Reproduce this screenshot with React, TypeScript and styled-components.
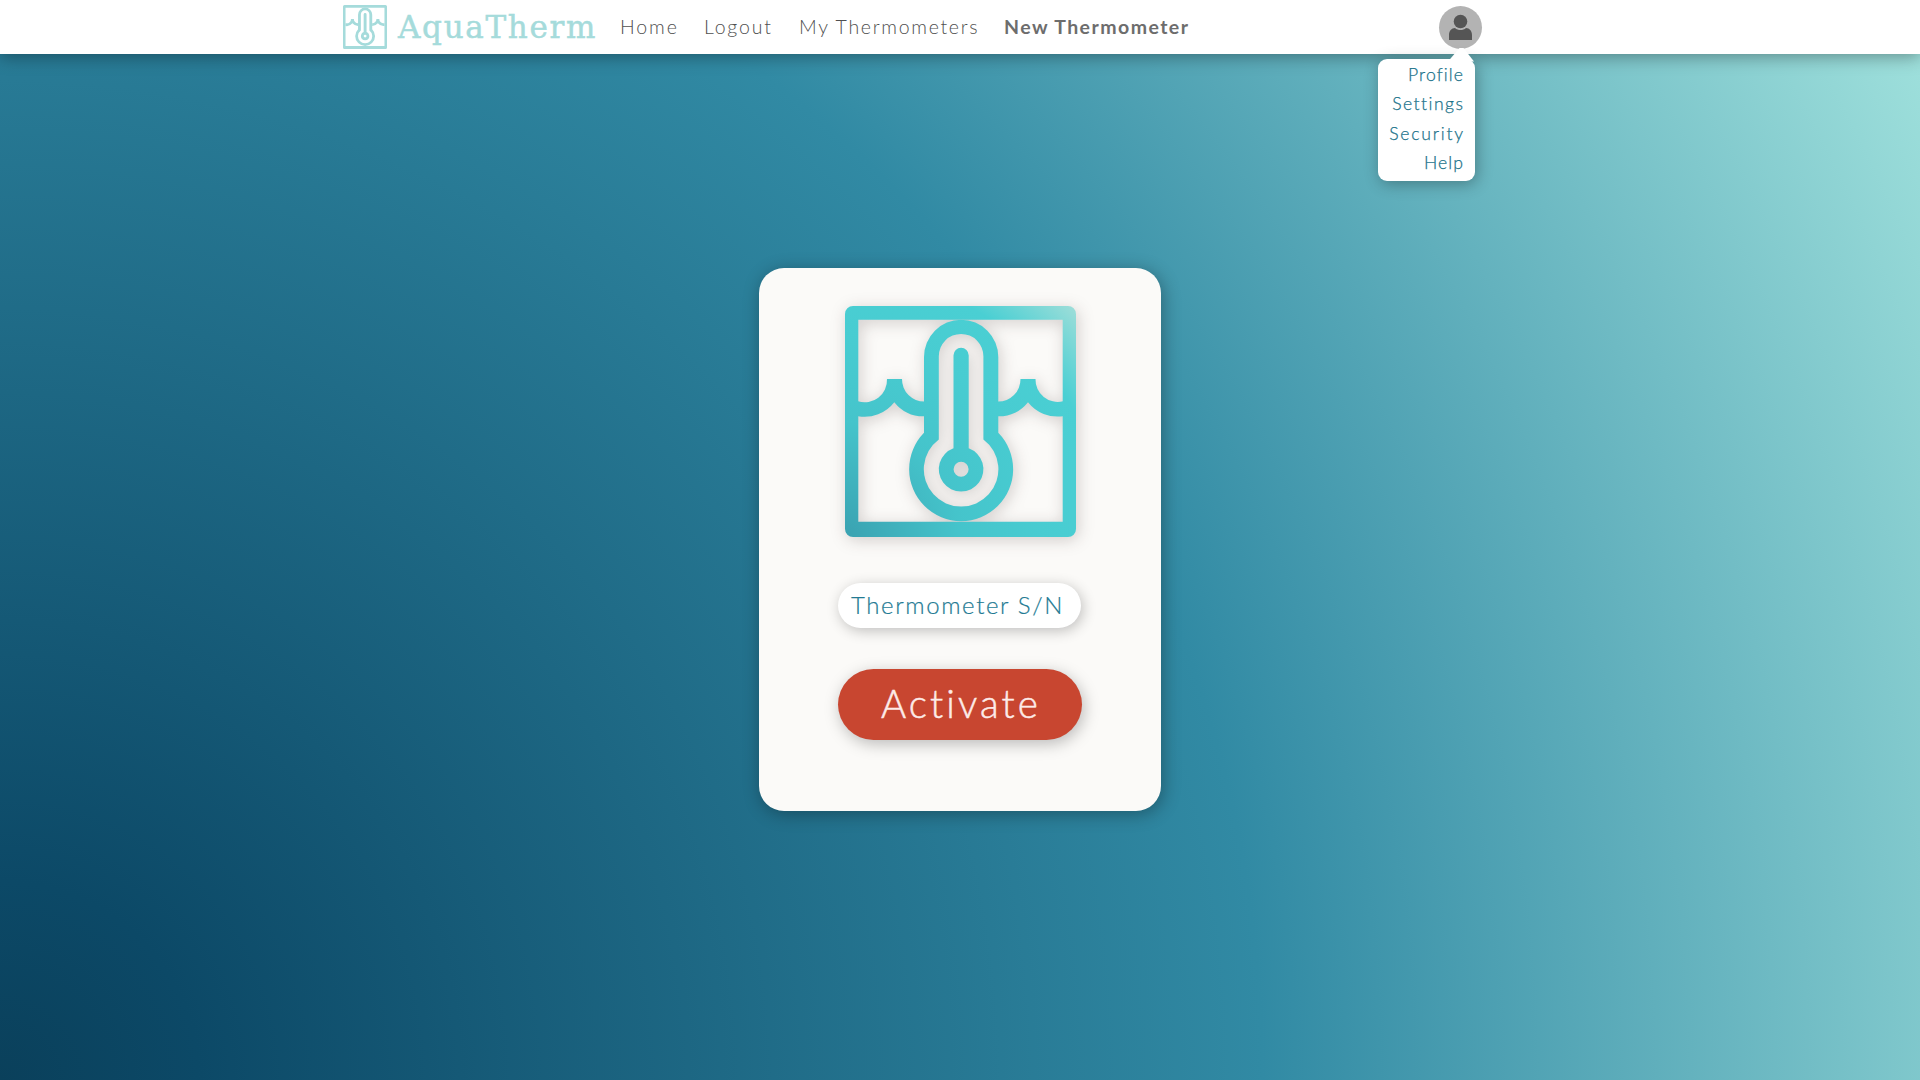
import React from 'react';
import styled, { createGlobalStyle } from 'styled-components';

const GlobalStyle = createGlobalStyle`
  * { box-sizing: border-box; }
  html, body { margin: 0; padding: 0; }
  body { overflow: hidden; }
`;

const Page = styled.div`
  display: flex;
  flex-direction: column;
  width: 100vw;
  height: 100vh;
  font-family: Lato, 'Open Sans', sans-serif;
  font-weight: 300;
  background: radial-gradient(
    circle farthest-corner at 0% 100%,
    #0a405b 0%,
    #0c4967 9%,
    #318aa4 57.3%,
    #a1e2dd 100%
  );
`;

const Header = styled.header`
  display: flex;
  flex: none;
  justify-content: space-between;
  align-items: center;
  height: 54px;
  padding: 0 438px 0 343px;
  background: #fff;
  box-shadow: 0 3px 16px rgba(0, 0, 0, 0.34);
`;

const HeaderLeft = styled.div`
  display: flex;
  align-items: center;
`;

const Brand = styled.div`
  display: flex;
  align-items: center;
  gap: 11px;
  width: 277px;
  color: #a5dbdb;
`;

const BrandName = styled.span`
  font-family: 'DejaVu Serif', serif;
  font-weight: 400;
  font-size: 31px;
  line-height: 44px;
  letter-spacing: 1.7px;
  -webkit-text-stroke: 0.5px currentColor;
  white-space: nowrap;
`;

const Nav = styled.nav`
  display: flex;
`;

const NavLink = styled.a<{ $width: number; $spacing: number; $active?: boolean }>`
  flex: none;
  width: ${(p) => p.$width}px;
  font-size: 19.5px;
  line-height: 28px;
  letter-spacing: ${(p) => p.$spacing}px;
  font-weight: ${(p) => (p.$active ? 700 : 300)};
  color: ${(p) => (p.$active ? '#6d6d6d' : '#505050')};
  white-space: nowrap;
`;

const Account = styled.div`
  position: relative;
  width: 43px;
  height: 43px;
`;

const Avatar = styled.div`
  width: 43px;
  height: 43px;
  border-radius: 50%;
  overflow: hidden;
  background: #b3b3b3;
`;

const Menu = styled.div`
  position: absolute;
  top: 53px;
  right: 7px;
  display: flex;
  flex-direction: column;
  align-items: flex-end;
  width: 97px;
  height: 122px;
  padding: 1px 12px 0 0;
  border-radius: 9px;
  background: #fff;
  box-shadow: 2px 3px 16px rgba(0, 0, 0, 0.3);

  &::before {
    content: '';
    position: absolute;
    top: -11px;
    right: 1px;
    width: 26px;
    height: 14px;
    background: #fff;
    clip-path: polygon(46% 0, 58% 0, 100% 100%, 0 100%);
  }
`;

const MenuItem = styled.a<{ $spacing: number }>`
  font-size: 17.6px;
  line-height: 29.5px;
  letter-spacing: ${(p) => p.$spacing}px;
  margin-right: ${(p) => -p.$spacing}px;
  font-weight: 300;
  color: #1a728a;
  -webkit-text-stroke: 0.25px currentColor;
  white-space: nowrap;
`;

const Main = styled.main`
  display: flex;
  flex: 1;
  justify-content: center;
  align-items: flex-start;
  padding-top: 214px;
`;

const Card = styled.section`
  display: flex;
  flex-direction: column;
  align-items: center;
  width: 402px;
  height: 543px;
  padding-top: 38px;
  border-radius: 25px;
  background: #fbfaf8;
  box-shadow: 2px 3px 18px rgba(0, 0, 0, 0.32);
`;

const CardLogo = styled.div`
  height: 231px;
  margin-left: 1px;
  filter: drop-shadow(2px 3px 8px rgba(40, 20, 20, 0.2));
`;

const SerialField = styled.div`
  display: flex;
  align-items: center;
  width: 243px;
  height: 45px;
  margin: 46px 1px 0 0;
  padding: 0 0 2px 13px;
  border-radius: 23px;
  background: #fff;
  box-shadow: 2px 3px 14px rgba(0, 0, 0, 0.24);
  font-size: 24px;
  letter-spacing: 1.6px;
  color: #237a93;
  -webkit-text-stroke: 0.2px currentColor;
  white-space: nowrap;
`;

const ActivateButton = styled.button`
  width: 244px;
  height: 71px;
  margin-top: 41px;
  padding: 0 0 4px;
  border: 0;
  border-radius: 36px;
  background: #c84630;
  box-shadow: 2px 4px 16px rgba(0, 0, 0, 0.26);
  font-family: inherit;
  font-weight: 300;
  font-size: 38.5px;
  letter-spacing: 3.1px;
  text-indent: 2px;
  color: #fdebe8;
  -webkit-text-stroke: 0.5px currentColor;
`;

type MarkProps = { size: number; fill: string };

const ThermometerMark = ({ size, fill }: MarkProps) => (
  <svg width={size} height={size} viewBox="0 0 231 231" display="block">
    <defs>
      <radialGradient id="aqua" gradientUnits="userSpaceOnUse" cx="0" cy="231" r="327">
        <stop offset="0" stopColor="#3aa2b1" />
        <stop offset="0.35" stopColor="#45c4cb" />
        <stop offset="0.6" stopColor="#48ccd1" />
        <stop offset="0.8" stopColor="#4acfd3" />
        <stop offset="1" stopColor="#a0ded9" />
      </radialGradient>
    </defs>
    <g fill={fill} fillRule="evenodd">
      <path d="M8 0H223a8 8 0 0 1 8 8V223a8 8 0 0 1-8 8H8a8 8 0 0 1-8-8V8a8 8 0 0 1 8-8ZM13.3 13.8V215.8H217.7V13.8Z" />
      <path d="M79 126.8V50.9a37.1 37.1 0 0 1 74.3 0V126.8A52 52 0 1 1 79 126.8ZM93.8 133.4V50.2a22.3 22.3 0 0 1 44.6 0V133.4A37.3 37.3 0 1 1 93.8 133.4Z" />
      <path d="M108.5 142.3V49.3a7.6 7.6 0 0 1 15.2 0V142.3A22.3 22.3 0 1 1 108.5 142.3ZM123.6 163.3a7.5 7.5 0 1 0-15 0a7.5 7.5 0 1 0 15 0Z" />
      <path d="M42 73H57A22.3 22.3 0 0 0 79.5 95.6V110.3A37.5 37.5 0 0 1 49.3 96.2A37.5 37.5 0 0 1 13 110.2V95.3A22.3 22.3 0 0 0 42 73Z" />
      <path d="M175.5 73H190.5A22.3 22.3 0 0 0 218 95.3V110.2A37.5 37.5 0 0 1 183 96.2A37.5 37.5 0 0 1 153 110.3V95.6A22.3 22.3 0 0 0 175.5 73Z" />
    </g>
  </svg>
);

const PersonIcon = () => (
  <svg width="43" height="43" viewBox="0 0 43 43" display="block">
    <g fill="#555">
      <circle cx="21.5" cy="15.5" r="6.8" />
      <path d="M10 34V29C10 25 12.5 22.3 16 22.1C19 24.8 24 24.8 27 22.1C30.5 22.3 33 25 33 29V34Z" />
    </g>
  </svg>
);

const navLinks = [
  { label: 'Home', width: 84, spacing: 1.9 },
  { label: 'Logout', width: 95, spacing: 1.8 },
  { label: 'My Thermometers', width: 205, spacing: 1.7 },
  { label: 'New Thermometer', width: 190, spacing: 1.45, active: true },
];

const menuItems = [
  { label: 'Profile', spacing: 1.1 },
  { label: 'Settings', spacing: 1.45 },
  { label: 'Security', spacing: 1.75 },
  { label: 'Help', spacing: 1.1 },
];

export default function App() {
  return (
    <>
      <GlobalStyle />
      <Page>
        <Header>
          <HeaderLeft>
            <Brand>
              <ThermometerMark size={44} fill="currentColor" />
              <BrandName>AquaTherm</BrandName>
            </Brand>
            <Nav>
              {navLinks.map((l) => (
                <NavLink key={l.label} $width={l.width} $spacing={l.spacing} $active={l.active}>
                  {l.label}
                </NavLink>
              ))}
            </Nav>
          </HeaderLeft>
          <Account>
            <Avatar>
              <PersonIcon />
            </Avatar>
            <Menu>
              {menuItems.map((m) => (
                <MenuItem key={m.label} $spacing={m.spacing}>
                  {m.label}
                </MenuItem>
              ))}
            </Menu>
          </Account>
        </Header>
        <Main>
          <Card>
            <CardLogo>
              <ThermometerMark size={231} fill="url(#aqua)" />
            </CardLogo>
            <SerialField>Thermometer S/N</SerialField>
            <ActivateButton>Activate</ActivateButton>
          </Card>
        </Main>
      </Page>
    </>
  );
}
